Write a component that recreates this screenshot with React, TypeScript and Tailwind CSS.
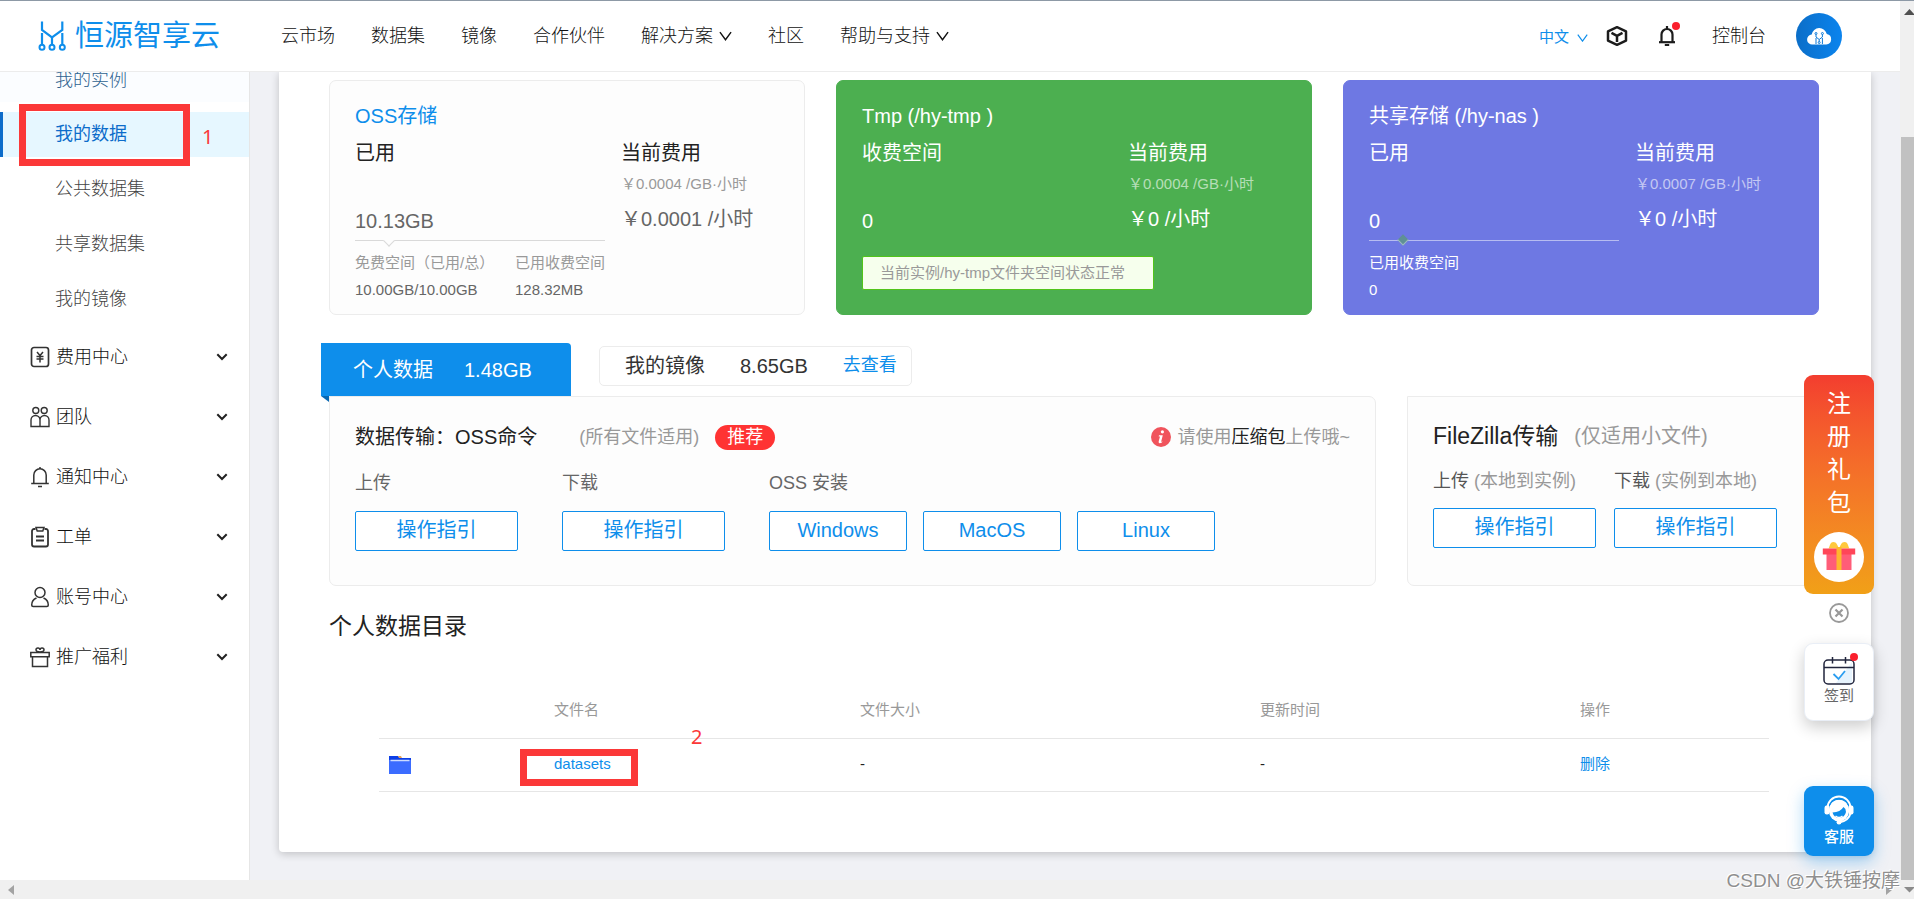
import React from "react";
import clsx from "clsx";

const FONT = "font-['Liberation_Sans','Noto_Sans_CJK_SC',sans-serif]";

/* ---------- icons ---------- */

const ChevronThin = ({ className }: { className?: string }) => (
	<svg viewBox="0 0 14 10" className={className} fill="none" stroke="currentColor">
		<path d="M1 0.8 7 9 13 0.8" strokeWidth="1.5" />
	</svg>
);

const ChevronSmall = () => (
	<svg viewBox="0 0 12 8" className="h-2 w-3" fill="none" stroke="#222" strokeWidth="2">
		<path d="M1.3 1.2 6 6 10.7 1.2" />
	</svg>
);

const LogoIcon = () => (
	<svg viewBox="0 0 28 30" className="h-[30px] w-7" fill="none" stroke="#0e8eeb" strokeWidth="2.2">
		<path d="M4 .5V9L14 16.300 24.300 9V.5" />
		<path d="M4 12V23.500M14 16v7.500M24.300 12V23.500" />
		<circle cx="4" cy="26.300" r="2.500" strokeWidth="2" />
		<circle cx="14" cy="26.300" r="2.500" strokeWidth="2" />
		<circle cx="24.300" cy="26.300" r="2.500" strokeWidth="2" />
	</svg>
);

const CubeIcon = () => (
	<svg viewBox="0 0 22 20" className="h-5 w-[22px]" fill="none" stroke="#1c1c1c" strokeWidth="2.5" strokeLinejoin="round">
		<path d="M11 1.2 20 5.4V14.6L11 18.8 2 14.6V5.4Z" />
		<path d="M5.5 6.8 11 9.8 16.5 6.8M11 9.8V16" />
	</svg>
);

const HeaderBell = () => (
	<svg viewBox="0 0 18 20" className="h-5 w-[18px]" fill="none" stroke="#1c1c1c" strokeWidth="2.2">
		<path d="M3.5 16V8.5a5.5 5.5 0 0 1 11 0V16" />
		<path d="M1 16.2H17" />
		<path d="M9 0V3M6.8 19H11.2" />
	</svg>
);

const AvatarIcon = () => (
	<svg viewBox="0 0 46 46" className="h-[46px] w-[46px]">
		<defs>
			<linearGradient id="avatar" x1="0" x2="1" y1="0" y2="0">
				<stop offset="0" stopColor="#0b6ec8" />
				<stop offset="1" stopColor="#0b84ee" />
			</linearGradient>
		</defs>
		<circle cx="23" cy="23" r="23" fill="url(#avatar)" />
		<path d="M16.5 31.5a5 5 0 0 1-.8-10A7.7 7.7 0 0 1 30.8 21a5.3 5.3 0 0 1-.6 10.5Z" fill="#fff" />
		<g fill="none" stroke="#0b79d8" strokeWidth="1">
			<path d="M20 21.5V24L23.2 26.5 26.4 24V21.5M20 25v6M26.4 25v6M23.2 26.5v2" />
			<circle cx="20" cy="20.5" r="1" />
			<circle cx="26.4" cy="20.5" r="1" />
			<circle cx="23.2" cy="29.5" r="1" />
		</g>
	</svg>
);

const menuSvg = {
	viewBox: "0 0 20 22",
	className: "h-[22px] w-5",
	fill: "none",
	stroke: "#333",
	strokeWidth: 1.5,
};

const FeeIcon = () => (
	<svg {...menuSvg}>
		<rect x="1.5" y="1.5" width="17" height="19" rx="2.5" strokeWidth="1.7" />
		<path d="M7 6 10 9.5 13 6M6.5 10.5h7M6.5 13h7M10 9.5V16.5" />
	</svg>
);

const TeamIcon = () => (
	<svg {...menuSvg} strokeWidth={1.4}>
		<circle cx="5.8" cy="4.5" r="3" />
		<circle cx="14.2" cy="4.5" r="3" />
		<path d="M1 20.5V14a4.5 4.5 0 0 1 9 0V20.5ZM10 20.5V14a4.5 4.5 0 0 1 9 0V20.5Z" />
	</svg>
);

const BellIcon = () => (
	<svg {...menuSvg}>
		<path d="M3.8 17.5V9a6.2 6.2 0 0 1 12.4 0V17.5" />
		<path d="M1.2 17.5H18.8M10 1V3M8 20.5H12" />
	</svg>
);

const OrderIcon = () => (
	<svg {...menuSvg}>
		<path d="M5.5 3H4a2 2 0 0 0-2 2V18.5a2 2 0 0 0 2 2H16a2 2 0 0 0 2-2V5a2 2 0 0 0-2-2H14.5" strokeWidth="1.8" />
		<path d="M6 1.5H14L12.8 5H7.2Z" />
		<path d="M6 10.5h8M6 14.5h8" strokeWidth="1.8" />
	</svg>
);

const AccountIcon = () => (
	<svg {...menuSvg}>
		<circle cx="10" cy="6.5" r="5" />
		<path d="M6.5 12C3 13.5 1.7 16 1.7 19q0 1.5 1.5 1.5H16.8q1.5 0 1.5-1.5C18.3 16 17 13.5 13.5 12" />
	</svg>
);

const PromoIcon = () => (
	<svg {...menuSvg}>
		<path d="M.8 6.5H19.2V10.8H.8ZM2.5 10.8V20.5H17.5V10.8" />
		<path d="M10 6C8.5 6 6 6 6 3.8 6 1.5 9.8 1 10 4M10 6C11.5 6 14 6 14 3.8 14 1.5 10.2 1 10 4" />
	</svg>
);

const InfoIcon = () => (
	<svg viewBox="0 0 20 20" className="h-5 w-5">
		<circle cx="10" cy="10" r="10" fill="#f0545c" />
		<circle cx="11.4" cy="4.8" r="1.6" fill="#fff" />
		<path d="M8 8.3H11.8L10.2 14.5Q10.2 15.2 12 14.3 10.5 16.5 8.5 16.3 7.2 16 7.7 14.3L9 9.5H7.7Z" fill="#fff" />
	</svg>
);

const FolderIcon = () => (
	<svg viewBox="0 0 22 18" className="h-[18px] w-[22px]">
		<path d="M0 0H9l2 2H22V18H0Z" fill="#0d3fe6" />
		<path d="M9 0h3l1 2h-3Z" fill="#e8a35c" />
		<path d="M0 4H22V18H0Z" fill="#3b6cff" />
		<path d="M1.5 4.5h19" stroke="#cddcff" strokeWidth="1.5" />
	</svg>
);

const GiftIcon = () => (
	<svg viewBox="0 0 34 30" className="h-[30px] w-[34px]">
		<path d="M16.5 6.5H6.5C8 5 7.5 0 11.5 0 14.5 0 16 3.5 16.5 6.5ZM17.5 6.5H27.5C26 5 26.5 0 22.5 0 19.5 0 18 3.5 17.5 6.5Z" fill="#ffc83d" />
		<path d="M4.5 12h25V28h-25Z" fill="#ff5d78" />
		<path d="M.8 6.5H33.2V12.5H.8Z" fill="#ff4658" />
		<path d="M14.5 5h5V28h-5Z" fill="#ffb62e" />
	</svg>
);

const CloseIcon = () => (
	<svg viewBox="0 0 20 20" className="h-5 w-5" fill="none" stroke="#999">
		<circle cx="10" cy="10" r="9" strokeWidth="1.8" />
		<path d="M6.5 6.5 13.5 13.5M13.5 6.5 6.5 13.5" strokeWidth="2.2" />
	</svg>
);

const CheckinIcon = () => (
	<svg viewBox="0 0 34 30" className="h-[30px] w-[34px]" fill="none" stroke="#20243c" strokeWidth="1.5">
		<path d="M30 6 14 27H30Z" fill="#e6f3fd" stroke="none" />
		<rect x="2" y="4" width="30" height="24" rx="4" />
		<path d="M2 11.5H32M10.5 1V7.5M23.5 1V7.5" />
		<path d="M11.5 18 16.5 23 23 15" stroke="#2a9df0" strokeWidth="1.8" />
	</svg>
);

const ServiceIcon = () => (
	<svg viewBox="0 0 30 30" className="h-[30px] w-[30px]" fill="none">
		<path d="M3.5 13a11.5 11.5 0 0 1 23 0" stroke="#fff" strokeWidth="2" />
		<path d="M5 14.5a10 10 0 0 1 20 0v2a10 10 0 0 1-20 0Z" fill="#fff" />
		<path d="M5.3 11a10.2 9.8 0 0 1 19.4 0" stroke="#0e8eeb" strokeWidth="1" />
		<path d="M8.5 17.5q8-.5 11-5.5 2.500 1.500 2.500 5a7 7.500 0 0 1-13.500.500Z" fill="#0e8eeb" />
		<path d="M11.5 21q3.5 3 7 0" stroke="#fff" strokeWidth="1.5" />
		<rect x="0.5" y="10.5" width="5" height="9" rx="2.2" fill="#fff" />
		<rect x="24.5" y="10.5" width="5" height="9" rx="2.2" fill="#fff" />
		<path d="M26.5 18.5q-2 7.5-11.5 9" stroke="#fff" strokeWidth="2" />
		<circle cx="15" cy="27.2" r="2.4" fill="#fff" />
	</svg>
);

/* ---------- data ---------- */

const navItems = [
	{ label: "云市场" },
	{ label: "数据集" },
	{ label: "镜像" },
	{ label: "合作伙伴" },
	{ label: "解决方案", dropdown: true },
	{ label: "社区" },
	{ label: "帮助与支持", dropdown: true },
];

const subItems = ["我的实例", "我的数据", "公共数据集", "共享数据集", "我的镜像"];

const menuGroups = [
	{ label: "费用中心", Icon: FeeIcon },
	{ label: "团队", Icon: TeamIcon },
	{ label: "通知中心", Icon: BellIcon },
	{ label: "工单", Icon: OrderIcon },
	{ label: "账号中心", Icon: AccountIcon },
	{ label: "推广福利", Icon: PromoIcon },
];

/* ---------- layout parts ---------- */

const Header = () => (
	<header className="flex h-[72px] shrink-0 items-center border-t border-b border-t-[#8d99a6] border-b-[#ececec] bg-white pr-[58px] pl-[38px] font-light">
		<a href="#" className="flex w-[243px] items-center gap-[9px] text-[29px] leading-9 font-normal whitespace-nowrap text-[#0e8eeb]">
			<LogoIcon />
			恒源智享云
		</a>
		<nav className="flex gap-9 text-[18px] text-[#111]">
			{navItems.map((item) => (
				<a href="#" key={item.label} className="flex items-center gap-[6px] whitespace-nowrap">
					{item.label}
					{item.dropdown && <ChevronThin className="h-[10px] w-[13px]" />}
				</a>
			))}
		</nav>
		<div className="ml-auto flex items-center">
			<button className="flex items-center gap-2 pt-[3px] text-[15px] font-normal text-[#0e8eeb]">
				中文
				<ChevronThin className="h-2 w-[11px]" />
			</button>
			<button className="ml-[18px]" aria-label="box">
				<CubeIcon />
			</button>
			<button className="relative ml-[30px]" aria-label="notice">
				<HeaderBell />
				<span className="absolute -top-1 -right-1 h-2 w-2 rounded-full bg-[#fa1f2d]" />
			</button>
			<a href="#" className="ml-9 text-[18px] text-[#111]">
				控制台
			</a>
			<button className="ml-[30px]" aria-label="avatar">
				<AvatarIcon />
			</button>
		</div>
	</header>
);

const Sidebar = () => (
	<aside className="w-[250px] shrink-0 overflow-hidden border-r border-[#e6e6e6] bg-white text-[18px] font-light">
		<ul className="flex flex-col gap-[10px]">
			{subItems.map((label, i) => (
				<li key={label} className="relative">
					<a
						href="#"
						className={clsx(
							"flex pl-[55px]",
							i === 0 ? "h-[30px] items-start bg-[#fbfdff] leading-4 text-[#2f6390]" : "h-[45px] items-center",
							i === 1 && "bg-[#e6f7ff] font-normal text-[#0c6cca] shadow-[inset_3px_0_0_#0c6cca]",
							i > 1 && "text-[#444]"
						)}
					>
						{label}
					</a>
					{i === 1 && (
						<>
							<span className="absolute -top-2 left-[19px] h-[62px] w-[171px] border-7 border-[#fb3838]" />
							<span className="absolute top-[11px] left-[202px] font-['Noto_Sans',sans-serif] text-[20px] leading-7 font-normal text-[#fb3838]">
								1
							</span>
						</>
					)}
				</li>
			))}
		</ul>
		<ul className="mt-[5px]">
			{menuGroups.map(({ label, Icon }) => (
				<li key={label}>
					<button className="flex h-[60px] w-full items-center pr-[21px] pl-[30px] text-[#111]">
						<Icon />
						<span className="ml-[6px] flex-1 text-left">{label}</span>
						<ChevronSmall />
					</button>
				</li>
			))}
		</ul>
	</aside>
);

type StorageCardProps = {
	title: string;
	usedLabel: string;
	used: string;
	price: string;
	cost: string;
	className: string;
	titleClass?: string;
	valueClass?: string;
	priceClass: string;
	children: React.ReactNode;
};

const StorageCard = ({ title, usedLabel, used, price, cost, className, titleClass, valueClass, priceClass, children }: StorageCardProps) => (
	<section className={clsx("h-[235px] min-w-0 flex-1 rounded-[7px] border pt-[17px] pl-[25px] text-[20px] whitespace-nowrap", className)}>
		<h3 className={clsx("h-9 leading-9", titleClass)}>{title}</h3>
		<div className="flex gap-4">
			<div className="w-[250px]">
				<p className="h-[38px] leading-[38px]">{usedLabel}</p>
				<p className={clsx("mt-[30px] h-[38px] leading-[38px]", valueClass)}>{used}</p>
				{children}
			</div>
			<div>
				<p className="h-[38px] leading-[38px]">当前费用</p>
				<p className={clsx("h-6 text-[15px] leading-6", priceClass)}>{price}</p>
				<p className={clsx("mt-1 h-[38px] leading-[38px]", valueClass)}>{cost}</p>
			</div>
		</div>
	</section>
);

const OutlineButton = ({ children, className }: { children: React.ReactNode; className: string }) => (
	<button className={clsx("h-10 rounded-[2px] border border-[#0e8eeb] bg-white pb-[2px] text-[20px] text-[#0e8eeb]", className)}>
		{children}
	</button>
);

const Storage = () => (
	<div className="flex gap-[31px]">
		<StorageCard
			title="OSS存储"
			usedLabel="已用"
			used="10.13GB"
			price="￥0.0004 /GB·小时"
			cost="￥0.0001 /小时"
			className="border-[#ececec] bg-[#fdfdfd] text-[#222]"
			titleClass="text-[#0e8eeb]"
			valueClass="text-[#666]"
			priceClass="text-[#999]"
		>
			<div className="relative flex justify-between border-t border-[#d9d9d9] pt-2 text-[15px] leading-[27px]">
				<span className="absolute -top-1 left-[30px] h-2 w-2 rotate-45 border-r border-b border-[#d9d9d9] bg-[#fdfdfd]" />
				<div>
					<p className="text-[#999]">免费空间（已用/总）</p>
					<p className="text-[#666]">10.00GB/10.00GB</p>
				</div>
				<div>
					<p className="text-[#999]">已用收费空间</p>
					<p className="text-[#666]">128.32MB</p>
				</div>
			</div>
		</StorageCard>
		<StorageCard
			title="Tmp (/hy-tmp )"
			usedLabel="收费空间"
			used="0"
			price="￥0.0004 /GB·小时"
			cost="￥0 /小时"
			className="border-[#4caf50] bg-[#4caf50] text-white"
			priceClass="text-white/60"
		>
			<div className="mt-4 h-[34px] w-[292px] rounded-[2px] border border-[#52c41a] bg-[#f6ffed] px-[17px] text-[15px] leading-8 text-[#999]">
				当前实例/hy-tmp文件夹空间状态正常
			</div>
		</StorageCard>
		<StorageCard
			title="共享存储 (/hy-nas )"
			usedLabel="已用"
			used="0"
			price="￥0.0007 /GB·小时"
			cost="￥0 /小时"
			className="border-[#6e78e3] bg-[#6e78e3] text-white"
			priceClass="text-white/60"
		>
			<div className="relative border-t border-white/50 pt-2 text-[15px] leading-[27px]">
				<span className="absolute -top-[5px] left-[30px] h-2 w-2 rotate-45 border-r border-b border-white/40 bg-[#5f9095]" />
				<p>已用收费空间</p>
				<p>0</p>
			</div>
		</StorageCard>
	</div>
);

const Tabs = () => (
	<div className="mt-7 flex h-[53px] items-start">
		<button className="relative -ml-2 flex h-[53px] w-[250px] items-center gap-[31px] rounded-tr-[4px] bg-[#0e8eeb] pl-8 text-[20px] text-white">
			<span>个人数据</span>
			<span>1.48GB</span>
			<svg viewBox="0 0 8 6" className="absolute top-full left-0 h-[6px] w-2">
				<path d="M0 0H8V6Z" fill="#0868b3" />
			</svg>
		</button>
		<div className="mt-[3px] ml-7 flex h-10 items-center rounded-[5px] border border-[#ececec] bg-white px-[25px] pr-[14px] text-[20px] text-[#333]">
			<span>我的镜像</span>
			<span className="ml-[35px]">8.65GB</span>
			<a href="#" className="ml-[35px] pb-[2px] text-[18px] text-[#0e8eeb]">
				去查看
			</a>
		</div>
	</div>
);

const Transfer = () => (
	<div className="flex gap-[31px] whitespace-nowrap">
		<section className="h-[190px] flex-1 rounded-b-[7px] rounded-tr-[7px] border border-[#ececec] bg-[#fdfdfd] px-[25px] pt-[20px] text-[18px]">
			<div className="flex h-10 items-center">
				<h3 className="text-[20px] text-[#222]">数据传输：OSS命令</h3>
				<span className="ml-[42px] text-[#999]">(所有文件适用)</span>
				<span className="ml-4 h-[25px] w-[60px] rounded-full bg-[#ff3333] text-center leading-6 text-white">推荐</span>
				<p className="ml-auto flex items-center gap-[6px] text-[#999]">
					<InfoIcon />
					<span>
						请使用<span className="text-[#222]">压缩包</span>上传哦~
					</span>
				</p>
			</div>
			<div className="flex gap-11 text-[#666]">
				<div>
					<p className="h-[54px] leading-[52px]">上传</p>
					<OutlineButton className="w-[163px]">操作指引</OutlineButton>
				</div>
				<div>
					<p className="h-[54px] leading-[52px]">下载</p>
					<OutlineButton className="w-[163px]">操作指引</OutlineButton>
				</div>
				<div>
					<p className="h-[54px] leading-[52px]">OSS 安装</p>
					<div className="flex gap-4">
						<OutlineButton className="w-[138px]">Windows</OutlineButton>
						<OutlineButton className="w-[138px]">MacOS</OutlineButton>
						<OutlineButton className="w-[138px]">Linux</OutlineButton>
					</div>
				</div>
			</div>
		</section>
		<section className="h-[190px] w-[412px] rounded-b-[7px] border border-[#ececec] bg-[#fdfdfd] px-[25px] pt-[19px] text-[18px]">
			<div className="flex h-10 items-center">
				<h3 className="text-[23px] text-[#222]">FileZilla传输</h3>
				<span className="ml-4 text-[20px] text-[#999]">(仅适用小文件)</span>
			</div>
			<div className="flex gap-[18px] text-[#999]">
				<div>
					<p className="h-[52px] leading-[50px]">
						<span className="text-[#555]">上传</span> (本地到实例)
					</p>
					<OutlineButton className="w-[163px]">操作指引</OutlineButton>
				</div>
				<div>
					<p className="h-[52px] leading-[50px]">
						<span className="text-[#555]">下载</span> (实例到本地)
					</p>
					<OutlineButton className="w-[163px]">操作指引</OutlineButton>
				</div>
			</div>
		</section>
	</div>
);

const FileTable = () => (
	<div className="px-[50px] pt-4">
		<table className="w-full table-fixed text-left text-[15px] text-[#222]">
			<thead>
				<tr className="h-14 border-b border-[#e6e6e6] text-[#999]">
					<th className="w-[175px]" />
					<th className="w-[306px] font-normal">文件名</th>
					<th className="w-[400px] font-normal">文件大小</th>
					<th className="w-[320px] font-normal">更新时间</th>
					<th className="font-normal">操作</th>
				</tr>
			</thead>
			<tbody>
				<tr className="h-[53px] border-b border-[#e6e6e6]">
					<td className="pl-[10px]">
						<FolderIcon />
					</td>
					<td>
						<span className="relative">
							<a href="#" className="text-[#0e8eeb]">
								datasets
							</a>
							<span className="absolute -top-[6px] -left-[34px] h-[37px] w-[118px] border-7 border-[#fb3838]" />
							<span className="absolute -top-8 left-[137px] font-['Noto_Sans',sans-serif] text-[20px] leading-7 text-[#fb3838]">
								2
							</span>
						</span>
					</td>
					<td>-</td>
					<td>-</td>
					<td>
						<button className="text-[#0e8eeb]">删除</button>
					</td>
				</tr>
			</tbody>
		</table>
	</div>
);

const FloatingWidgets = () => (
	<div className="absolute top-[375px] right-10 flex w-[70px] flex-col items-center">
		<button className="flex h-[219px] w-full flex-col items-center rounded-[9px] bg-linear-to-b from-[#f33d2f] to-[#f1a017] pt-3 text-[24px] leading-[33px] text-white">
			{["注", "册", "礼", "包"].map((c) => (
				<span key={c}>{c}</span>
			))}
			<span className="mt-[13px] flex h-[50px] w-[50px] items-center justify-center rounded-full bg-white">
				<GiftIcon />
			</span>
		</button>
		<button className="mt-[9px]" aria-label="close">
			<CloseIcon />
		</button>
		<button className="relative mt-5 flex h-[78px] w-full flex-col items-center rounded-[9px] border border-[#e9eef6] bg-white pt-3 text-[15px] leading-5 text-[#666] shadow-[0_6px_16px_rgba(0,0,0,0.2)]">
			<CheckinIcon />
			签到
			<span className="absolute top-[9px] right-[15px] h-2 w-2 rounded-full bg-[#fa1f2d]" />
		</button>
		<button className="mt-[65px] flex h-[70px] w-full flex-col items-center rounded-[9px] bg-[#0e8eeb] pt-[9px] text-[15px] leading-6 font-medium text-white shadow-[0_6px_16px_rgba(14,142,235,0.35)]">
			<ServiceIcon />
			客服
		</button>
	</div>
);

const VerticalScrollbar = () => (
	<div className="flex w-[14px] shrink-0 flex-col border-t border-[#8d99a6] bg-[#f0f0f0] pl-px">
		<svg viewBox="0 0 13 18" className="h-[18px] w-[13px]">
			<path d="M3 14 8.5 8 14 14Z" fill="#505050" />
		</svg>
		<div className="mt-[118px] flex-1 bg-[#c1c1c1]" />
		<svg viewBox="0 0 13 19" className="h-[19px] w-[13px]">
			<path d="M3 7 8.5 12.5 14 7Z" fill="#8a8a8a" />
		</svg>
	</div>
);

const HorizontalScrollbar = () => (
	<div className="flex h-[19px] shrink-0 items-center justify-between bg-[#f0f0f0] px-2">
		<svg viewBox="0 0 6 10" className="h-[10px] w-[6px]">
			<path d="M6 0V10L0 5Z" fill="#a3a3a3" />
		</svg>
		<svg viewBox="0 0 6 10" className="h-[10px] w-[6px]">
			<path d="M0 0V10L6 5Z" fill="#a3a3a3" />
		</svg>
	</div>
);

export default function App() {
	return (
		<div className={clsx("relative flex h-screen overflow-hidden bg-[#f0f1f5]", FONT)}>
			<div className="flex min-w-0 flex-1 flex-col">
				<Header />
				<div className="flex min-h-0 flex-1 overflow-hidden">
					<Sidebar />
					<main className="min-w-0 flex-1 px-[29px]">
						<div className="rounded-b-[4px] bg-white pt-2 pr-[52px] pb-[60px] pl-[50px] shadow-[0_2px_8px_rgba(0,0,0,0.2)]">
							<Storage />
							<Tabs />
							<Transfer />
							<h2 className="h-20 text-[23px] leading-[80px] text-[#222]">个人数据目录</h2>
							<FileTable />
						</div>
					</main>
				</div>
				<HorizontalScrollbar />
			</div>
			<VerticalScrollbar />
			<FloatingWidgets />
			<p className="absolute right-[14px] bottom-1 text-[19px] leading-7 text-[#8f8f8f] [text-shadow:1px_1px_0_#fff,-1px_-1px_0_#fff]">
				CSDN @大铁锤按摩
			</p>
		</div>
	);
}
